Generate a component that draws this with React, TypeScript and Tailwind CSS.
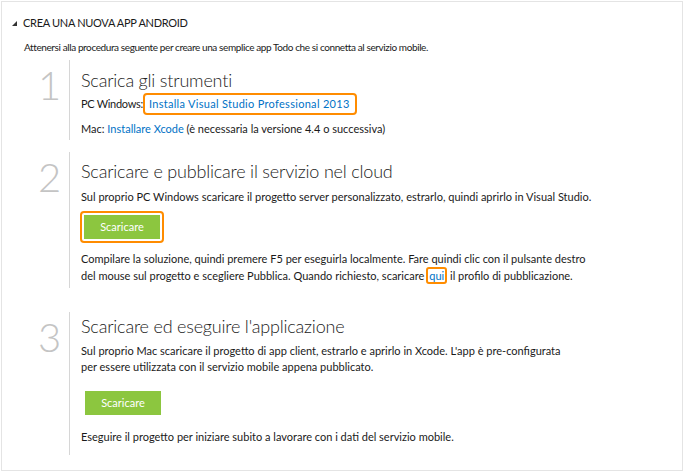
import React from 'react'

type StepProps = {
    n: string
    title: string
    numPad: string
    titlePad: string
    lineH: string
    children: React.ReactNode
}

const Step = ({ n, title, numPad, titlePad, lineH, children }: StepProps) => {
    return (
        <div className="flex">
            <div className={`w-[67px] shrink-0 pl-[36px] text-[40px] font-light leading-none text-[#c4c4c4] ${numPad}`}>{n}</div>
            <div className={`border-l border-[#d6d6d6] pl-[11px] ${lineH}`}>
                <h2 className={`text-[18px] font-light leading-[24px] text-[#222] tracking-[-0.2px] ${titlePad}`}>{title}</h2>
                {children}
            </div>
        </div>
    )
}

const Button = () => (
    <button className="flex h-[24px] w-[76px] items-center justify-center bg-[#8cc63f] text-[11px] text-white">Scaricare</button>
)

export default function App() {
    return (
        <div className="h-[473px] w-[684px] bg-white p-[1px] font-['Lato','Liberation_Sans',sans-serif] text-[#1a1a1a]">
            <div className="h-[470px] w-[682px] border border-[#e4e4e4]">
                <div className="flex items-center pl-[10px] pt-[14px] text-[11px] leading-[14px] tracking-[-0.3px]">
                    <span className="mr-[6px] inline-block h-0 w-0 border-b-[5px] border-l-[5px] border-b-[#333] border-l-transparent" />
                    <span>CREA UNA NUOVA APP ANDROID</span>
                </div>
                <p className="pl-[22px] pt-[10px] text-[10px] leading-[14px] tracking-[-0.4px]">
                    Attenersi alla procedura seguente per creare una semplice app Todo che si connetta al servizio mobile.
                </p>

                <div className="mt-[6px]">
                    <Step n="1" title="Scarica gli strumenti" numPad="pt-[5px]" titlePad="pt-[8px]" lineH="h-[80px]">
                        <div className="mt-[1px] flex items-center text-[11px] leading-[16px]">
                            <span className="tracking-[-0.3px]">PC Windows:</span>
                            <span className="rounded-[4px] border-2 border-[#ff8c00] py-[1px] pl-[4px] pr-[5px] tracking-[0.3px] text-[#0072c6]">
                                Installa Visual Studio Professional 2013
                            </span>
                        </div>
                        <p className="mt-[6px] text-[11px] leading-[16px]">
                            Mac: <span className="text-[#0072c6]">Installare Xcode</span> (è necessaria la versione 4.4 o successiva)
                        </p>
                    </Step>
                </div>

                <div className="mt-[12px]">
                    <Step n="2" title="Scaricare e pubblicare il servizio nel cloud" numPad="pt-[5px]" titlePad="pt-[7px]" lineH="h-[136px]">
                        <p className="mt-[6px] text-[11px] leading-[16px]">
                            Sul proprio PC Windows scaricare il progetto server personalizzato, estrarlo, quindi aprirlo in Visual Studio.
                        </p>
                        <div className="mt-[6px] -ml-[1px] inline-block rounded-[4px] border-2 border-[#ff8c00] p-[2px]">
                            <Button />
                        </div>
                        <p className="mt-[7px] text-[11px] leading-[17px]">
                            Compilare la soluzione, quindi premere F5 per eseguirla localmente. Fare quindi clic con il pulsante destro
                            <br />
                            del mouse sul progetto e scegliere Pubblica. Quando richiesto, scaricare
                            <span className="ml-[2px] rounded-[3px] border-2 border-[#ff8c00] px-[1px] text-[#0072c6]">qui</span> il profilo di pubblicazione.
                        </p>
                    </Step>
                </div>

                <div className="mt-[24px]">
                    <Step n="3" title="Scaricare ed eseguire l'applicazione" numPad="pt-[5px]" titlePad="pt-[2px]" lineH="h-[143px]">
                        <p className="mt-[5px] text-[11px] leading-[16px]">
                            Sul proprio Mac scaricare il progetto di app client, estrarlo e aprirlo in Xcode. L'app è pre-configurata
                            <br />
                            per essere utilizzata con il servizio mobile appena pubblicato.
                        </p>
                        <div className="mt-[16px] pl-[4px]">
                            <Button />
                        </div>
                        <p className="mt-[14px] text-[11px] leading-[16px]">
                            Eseguire il progetto per iniziare subito a lavorare con i dati del servizio mobile.
                        </p>
                    </Step>
                </div>
            </div>
        </div>
    )
}
